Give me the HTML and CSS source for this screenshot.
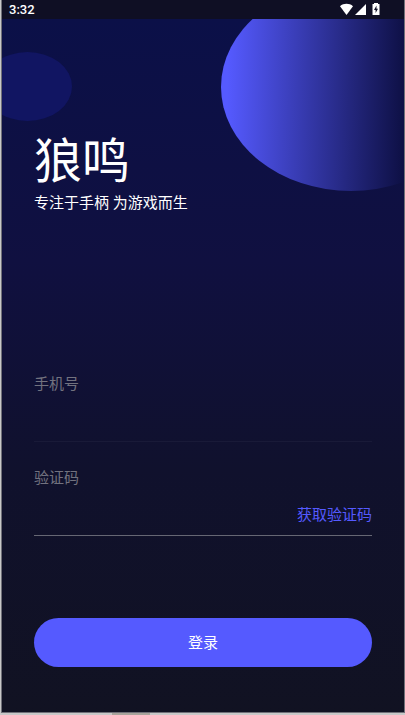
FILE: index.html
```html
<!DOCTYPE html>
<html lang="zh-CN">
<head>
    <meta charset="UTF-8">
    <meta name="viewport" content="width=device-width, initial-scale=1.0">
    <title>狼鸣</title>
    <link rel="stylesheet" href="styles.css">
</head>
<body>
    <div class="screen">
        <header class="statusbar">
            <span class="time">3:32</span>
            <svg class="status-icons" width="40" height="13" viewBox="0 0 40 13" fill="#fff" aria-hidden="true">
                <path d="M0 3.200C3.600 0 9.400 0 13 3.200L6.500 12z"/>
                <path d="M26 1v11H15z"/>
                <path fill-rule="evenodd" d="M34 0h4v1h1.500v11h-7V1H34zM36.500 2.500L34 7h1.600v3L38 5.800h-1.500z"/>
            </svg>
        </header>

        <main>
            <div class="circle-small"></div>
            <div class="circle-big"></div>

            <div class="brand">
                <h1>狼鸣</h1>
                <p>专注于手柄 为游戏而生</p>
            </div>

            <form id="loginForm">
                <div class="field">
                    <label for="phone">手机号</label>
                    <div class="field-row">
                        <input type="tel" id="phone" name="phone">
                    </div>
                </div>
                <div class="field field-code">
                    <label for="code">验证码</label>
                    <div class="field-row">
                        <input type="text" id="code" name="code" inputmode="numeric">
                        <button type="button" class="code-btn">获取验证码</button>
                    </div>
                </div>
                <button type="submit" class="login-btn">登录</button>
            </form>
        </main>
    </div>
    <div class="desktop-edge"><span></span></div>
</body>
</html>
```

FILE: styles.css
```css
* {
    box-sizing: border-box;
}

body {
    margin: 0;
    min-height: 100vh;
    display: flex;
    flex-direction: column;
    background-color: #c8c8c8;
    color: #fff;
    font-family: Roboto, "Noto Sans CJK SC", sans-serif;
    font-size: 15px;
    line-height: 24px;
}

.screen {
    flex: 1;
    display: flex;
    flex-direction: column;
    margin: 0 0 0 1px;
    border: 1px solid #707078;
    border-top: none;
}

.statusbar {
    height: 19px;
    padding: 0 24px 0 7px;
    display: flex;
    justify-content: space-between;
    align-items: center;
    background-color: #0f0f24;
}

.time {
    font-size: 13px;
    font-weight: 500;
    line-height: 19px;
}

.status-icons {
    display: block;
}

main {
    flex: 1;
    position: relative;
    overflow: hidden;
    padding: 114px 32px 45px;
    background: linear-gradient(#0b1048, #101040 35%, #10112d 65%, #111222);
}

/* background circles */
.circle-small,
.circle-big {
    position: absolute;
    border-radius: 50%;
}

.circle-small {
    top: 33px;
    left: -19px;
    width: 89px;
    height: 69px;
    background-color: #111562;
}

.circle-big {
    top: -36px;
    right: -77px;
    width: 260px;
    height: 208px;
    background: linear-gradient(91deg, #555aff 3%, #0c0e40 72%);
}

.brand {
    position: relative;
}

h1 {
    margin: 0;
    font-size: 48px;
    font-weight: 400;
    line-height: 58px;
}

.brand p {
    margin: 0;
}

form {
    margin-top: 157px;
}

.field {
    border-bottom: 1px solid #191a38;
}

.field label {
    display: block;
    color: #72727f;
}

.field-row {
    display: flex;
    height: 45px;
}

.field input {
    flex: 1;
    min-width: 0;
    padding: 0;
    border: none;
    outline: none;
    background: none;
    color: #fff;
    font: inherit;
}

.field-code {
    margin-top: 24px;
    border-bottom-color: #666774;
}

.code-btn {
    margin-top: 4px;
    padding: 0;
    border: none;
    background: none;
    color: #555aff;
    font: inherit;
    cursor: pointer;
}

.login-btn {
    display: block;
    width: 100%;
    height: 49px;
    margin-top: 82px;
    border: none;
    border-radius: 25px;
    background-color: #555aff;
    color: #fff;
    font: inherit;
    cursor: pointer;
}

/* strip of desktop under the window */
.desktop-edge {
    height: 2px;
    padding-left: 112px;
}

.desktop-edge span {
    display: block;
    width: 38px;
    height: 2px;
    background-color: #a8a49c;
}
```
